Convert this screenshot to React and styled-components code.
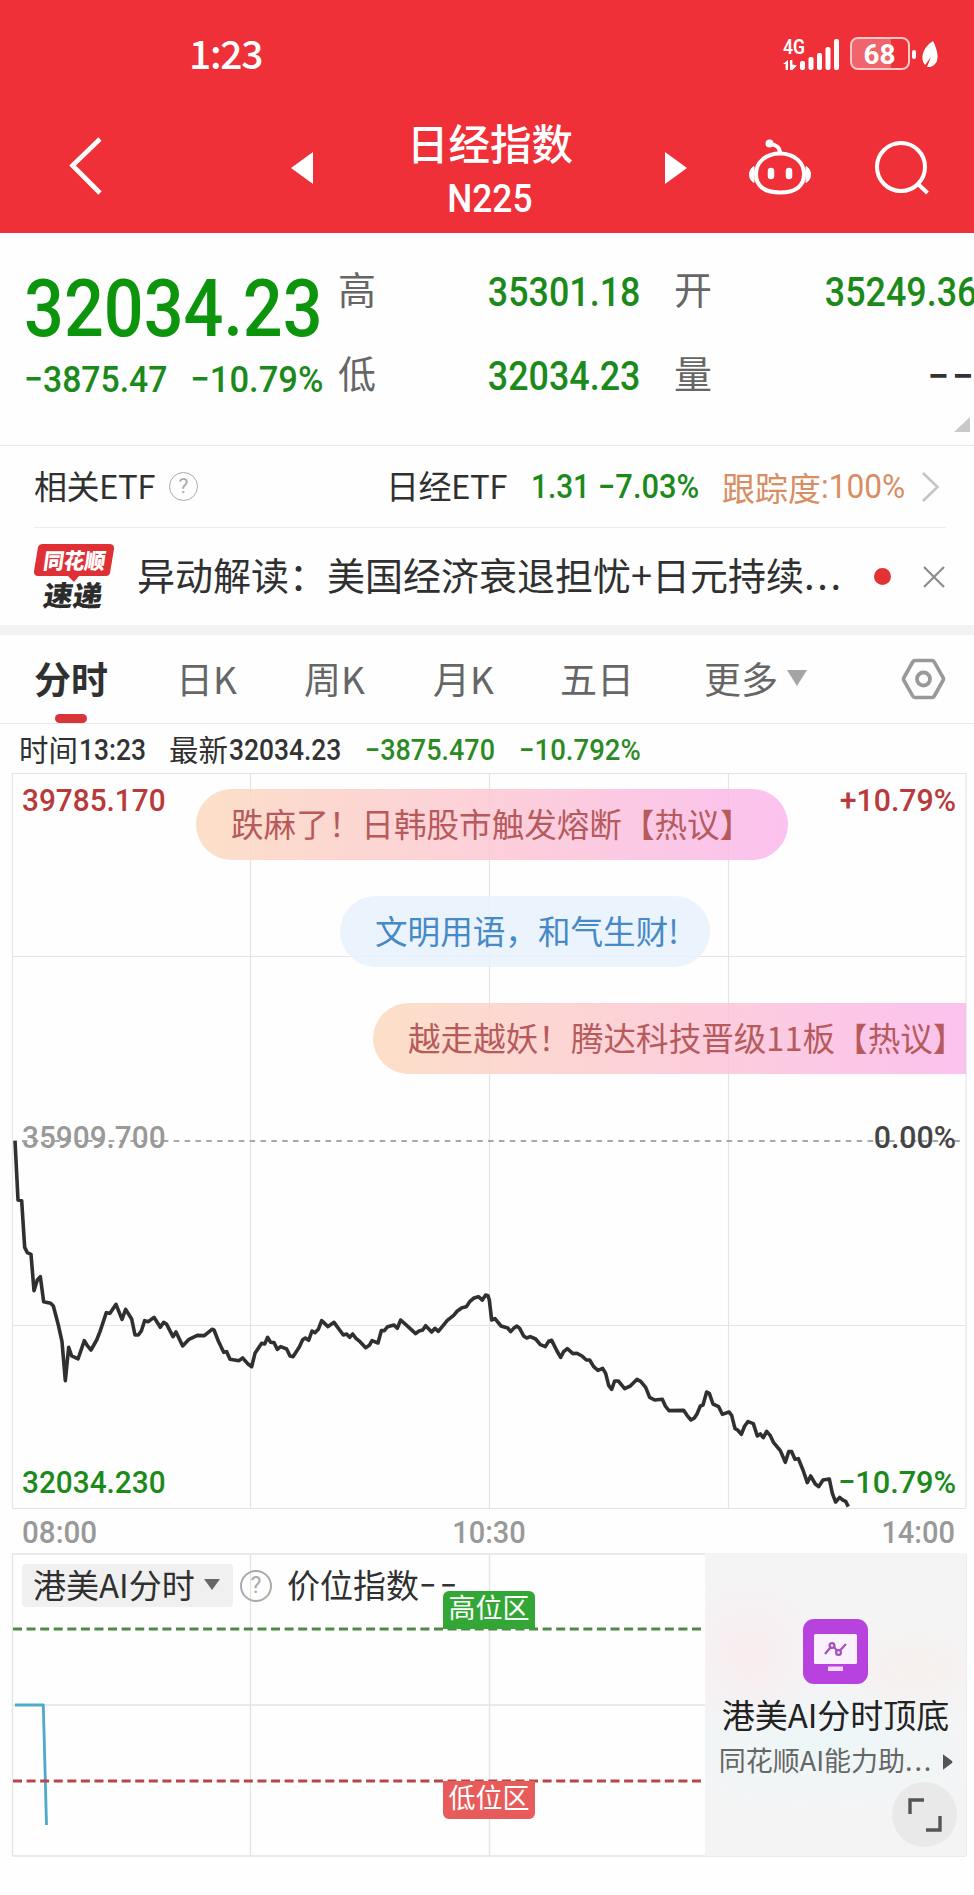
import styled, { createGlobalStyle } from "styled-components";

const GREEN = "#1b8a1b";
const CJK = `"Noto Sans CJK SC", sans-serif`;

// intraday ticks, in thirds of a pixel from the zero line label
const TICKS = `45,62 54,240 65,242 74,382 82,398 93,403 102,512 112,480 121,470 131,545 152,550 160,558 175,615 186,665 196,782 206,682 215,708 234,717 253,662 262,677 273,690 290,660 300,635 319,578 330,580 348,553 366,598 377,568 395,597 405,645 415,645 424,633 434,602 445,605 462,592 481,622 491,607 500,613 519,650 528,636 548,678 567,658 592,646 613,647 636,628 642,630 655,663 671,697 680,695 690,718 717,722 728,714 745,733 755,740 765,700 785,670 794,672 803,652 812,667 822,668 832,688 842,680 860,687 870,708 879,710 898,681 908,659 916,654 926,661 936,633 945,638 955,628 965,602 984,620 1002,607 1030,645 1040,642 1049,652 1058,642 1068,655 1080,665 1097,683 1108,676 1116,662 1134,669 1144,632 1153,632 1163,620 1182,615 1192,625 1202,600 1220,616 1247,641 1257,633 1268,630 1277,617 1295,636 1305,625 1315,634 1342,601 1361,586 1372,573 1386,563 1399,560 1410,544 1422,534 1435,530 1447,540 1457,525 1464,527 1468,540 1475,600 1485,596 1503,618 1523,624 1532,635 1541,625 1551,618 1559,625 1571,648 1580,654 1591,650 1607,657 1621,674 1636,680 1646,664 1655,661 1671,693 1682,712 1691,695 1702,686 1719,701 1731,700 1746,708 1759,720 1769,720 1781,740 1794,751 1808,745 1817,760 1826,796 1835,808 1844,783 1855,783 1874,806 1891,798 1911,778 1922,784 1937,802 1949,832 1964,840 1987,838 1996,858 2007,872 2051,871 2061,886 2073,900 2083,894 2091,882 2101,858 2109,855 2120,816 2128,820 2139,852 2156,860 2167,883 2187,876 2195,886 2205,926 2213,930 2224,943 2234,918 2244,905 2260,911 2272,948 2281,942 2290,953 2300,934 2311,947 2321,968 2341,992 2356,1027 2366,995 2375,995 2385,1018 2395,1016 2409,1050 2422,1088 2432,1068 2446,1092 2456,1100 2469,1080 2488,1077 2497,1120 2507,1146 2519,1132 2528,1140 2537,1144 2545,1160`;

function StatusIcons() {
  return (
    <svg width="160" height="40" viewBox="0 0 160 40">
      <g fill="#fff">
        <rect x="20" y="27" width="5" height="9" rx="2" />
        <rect x="28.500" y="23" width="5" height="13" rx="2" />
        <rect x="37" y="19" width="5" height="17" rx="2" />
        <rect x="45.500" y="13" width="5" height="23" rx="2" />
        <rect x="54" y="5" width="5" height="31" rx="2" />
        <path d="M3 30 8 26v10H5.600v-6zM10 26h2.400v4.500l4.600 1-4.600 4.500H10z" />
        <rect x="132" y="16" width="4" height="9" rx="2" />
        <path fillRule="evenodd" d="M153 7c4 8 7 18 2 23-3 4-8 3-8 3l4-10-6 8c-5-6-3-17 8-24z" />
      </g>
      <path d="M78 5h33v29H78a6 6 0 0 1-6-6V11a6 6 0 0 1 6-6z" fill="#f0656c" />
      <rect x="71" y="4" width="58" height="31" rx="7" fill="none" stroke="#ffc9ca" strokeWidth="2" />
      <text x="3" y="20" fill="#fff" fontFamily="Roboto" fontWeight="600" fontSize="20" textLength="22" lengthAdjust="spacingAndGlyphs">4G</text>
      <text x="83.500" y="30" fill="#fff" fontFamily="Roboto" fontWeight="700" fontSize="28" textLength="32" lengthAdjust="spacingAndGlyphs">68</text>
    </svg>
  );
}

function RobotIcon() {
  return (
    <svg width="66" height="60" viewBox="0 0 66 60" fill="none" stroke="#fff" strokeWidth="4">
      <path d="M33 15.500C48 15.500 57 25 57 36S50 54.500 33 54.500 9 47 9 36 18 15.500 33 15.500z" />
      <path d="M33 15c0-5-4-8.500-10-9" />
      <circle cx="22.500" cy="5.500" r="4" fill="#fff" stroke="none" />
      <path d="M7 28.500c-6 3-6 13 0 16zM59 28.500c6 3 6 13 0 16z" fill="#fff" strokeWidth="1" />
      <path d="M24 33v5M42 33v5" strokeWidth="6.500" strokeLinecap="round" />
    </svg>
  );
}

function ChartGrid() {
  return (
    <svg width="974" height="737" viewBox="0 772 974 737" fill="none">
      <path d="M12.500 773.500H966M12.500 956.500H966M12.500 1325.500H966M12.500 1508.500H966M12.500 773V1508M250.500 773V1508M489.500 773V1508M728.500 773V1508M966 773V1508" stroke="#e4e4e4" strokeWidth="1.200" />
      <path d="M22 1141H962" stroke="#a8a8a8" strokeWidth="2.200" strokeDasharray="5.500 5.340" />
      <g transform="translate(0 1120) scale(.33333)">
        <polyline points={TICKS} stroke="#303030" strokeWidth="10.800" strokeLinejoin="round" />
      </g>
    </svg>
  );
}

function PositionGrid() {
  return (
    <svg width="974" height="304" viewBox="0 1553 974 304" fill="none">
      <path d="M12.500 1554H966M12.500 1705H966M12.500 1856H966M12.500 1554V1856M250.500 1554V1856M489.500 1554V1856M966 1554V1856" stroke="#e4e4e4" strokeWidth="1.300" />
      <path d="M13 1629H701" stroke="#4d8a44" strokeWidth="3" strokeDasharray="9 4.580" />
      <path d="M15 1705H43.300L46.500 1825" stroke="#4ea9cc" strokeWidth="2.800" strokeLinejoin="round" />
      <path d="M13 1781H701" stroke="#b5474b" strokeWidth="3" strokeDasharray="9 4.580" />
    </svg>
  );
}

export default function App() {
  return (
    <Page>
      <Global />
      <Header>
        <StatusBar>
          <Clock>1:23</Clock>
          <StatusIcons />
        </StatusBar>
        <NavBar>
          <svg width="40" height="62" viewBox="0 0 40 62" fill="none" stroke="#fff" strokeWidth="4.600">
            <path d="M32 2 4.500 28.500 32 56" />
          </svg>
          <svg width="22" height="32" viewBox="0 0 22 32" fill="#fff"><path d="M0 16 22 0v32z" /></svg>
          <TitleBox>
            <Title>日经指数</Title>
            <Num size={38} k={0.93} color="#fff" from="center">N225</Num>
          </TitleBox>
          <svg width="22" height="32" viewBox="0 0 22 32" fill="#fff"><path d="M22 16 0 0v32z" /></svg>
          <RobotIcon />
          <svg width="60" height="60" viewBox="0 0 60 60" fill="none" stroke="#fff" strokeWidth="4">
            <circle cx="29" cy="29" r="24" />
            <path d="M46 46 55.500 55" />
          </svg>
        </NavBar>
      </Header>

      <Quote>
        <Last>
          <Num size={80} k={0.877} color="#0d940d">32034.23</Num>
          <Change>
            <Num size={37} k={0.912}>−3875.47</Num>
            <Num size={37} k={0.935} from="right">−10.79%</Num>
          </Change>
        </Last>
        <Stats>
          <Label>高</Label>
          <Num size={40.5} k={0.885} from="right">35301.18</Num>
          <Label>开</Label>
          <Num size={40.5} k={0.885} from="right">35249.36</Num>
          <Label>低</Label>
          <Num size={40.5} k={0.885} from="right">32034.23</Num>
          <Label>量</Label>
          <Num size={40.5} k={0.95} color="#333" from="right" gap={3}>−−</Num>
        </Stats>
        <Corner />
      </Quote>

      <EtfRow>
        <Name tight>相关ETF</Name>
        <Help size={29} line={1.5}>?</Help>
        <Name tight>日经ETF</Name>
        <Num size={33} k={0.9}>1.31</Num>
        <Num size={33} k={0.935}>−7.03%</Num>
        <Track>跟踪度<Num size={33} k={0.96} weight={400} color="#d98d62">:100%</Num></Track>
        <svg width="18" height="30" viewBox="0 0 18 30" fill="none" stroke="#c4c4c4" strokeWidth="2.500">
          <path d="M1 1 15.500 15 1 29" />
        </svg>
      </EtfRow>

      <NewsRow>
        <Logo width="82" height="68" viewBox="0 0 82 68">
          <path d="M9 1H76a4 4 0 0 1 4 5L76 30a4 4 0 0 1-4 3H45l-5 6-6-6H4a4 4 0 0 1-4-5L4 4a5 5 0 0 1 5-3z" fill="#de3035" />
          <g fontFamily="Noto Sans CJK SC" fontWeight="900" transform="skewX(-8)">
            <text x="12" y="25.500" fontSize="22" fill="#fff" textLength="62" lengthAdjust="spacingAndGlyphs">同花顺</text>
            <text x="17" y="63" fontSize="28" fill="#2c2c2c" textLength="59" lengthAdjust="spacingAndGlyphs">速递</text>
          </g>
        </Logo>
        <Headline>异动解读：美国经济衰退担忧+日元持续<Dots>...</Dots></Headline>
        <RedDot />
        <svg width="22" height="22" viewBox="0 0 22 22" stroke="#8c8c8c" strokeWidth="2.200"><path d="M1 1 21 21M21 1 1 21" /></svg>
      </NewsRow>

      <Tabs>
        <Tab active>分时</Tab>
        <Tab>日K</Tab>
        <Tab>周K</Tab>
        <Tab>月K</Tab>
        <Tab>五日</Tab>
        <Tab>更多 <Caret w={10} h={16} color="#a5a5a5" /></Tab>
        <svg width="46" height="42" viewBox="0 0 46 42" fill="none" stroke="#999" strokeWidth="3.600" strokeLinejoin="round">
          <path d="M14 2.500H31q1.500 0 2.300 1.500L42 19.500q1 1.500 0 3L33.300 38q-.8 1.500-2.300 1.500H14q-1.500 0-2.300-1.500L3 22.500q-1-1.500 0-3L11.700 4q.8-1.500 2.300-1.500z" />
          <circle cx="22.500" cy="21" r="6.500" strokeWidth="3.800" />
        </svg>
      </Tabs>

      <InfoRow>
        <Info>时间<Num size={29} k={0.91} color="#333">13:23</Num></Info>
        <Info>最新<Num size={29} k={0.91} color="#333">32034.23</Num></Info>
        <Num size={29} k={0.93} color="#2c8a24">−3875.470</Num>
        <Num size={29} k={0.95} color="#2c8a24">−10.792%</Num>
      </InfoRow>

      <Stack h={737}>
        <ChartGrid />
        <ChartLabels>
          <Pair>
            <Num size={32} k={0.93} color="#b83a3a">39785.170</Num>
            <Num size={32} k={0.945} color="#b83a3a" from="right">+10.79%</Num>
          </Pair>
          <Pair>
            <Num size={32} k={0.93} color="#999">35909.700</Num>
            <Num size={32} k={0.945} color="#444" from="right">0.00%</Num>
          </Pair>
          <Pair>
            <Num size={32} k={0.93} color={GREEN}>32034.230</Num>
            <Num size={32} k={0.96} color={GREEN} from="right">−10.79%</Num>
          </Pair>
        </ChartLabels>
        <Barrage>
          <Pill left={196} w={592}>跌麻了！日韩股市触发熔断【热议】</Pill>
          <Pill left={340} w={370} calm>文明用语，和气生财!</Pill>
          <Pill left={373} w={593} cut>越走越妖！腾达科技晋级11板【热议】</Pill>
        </Barrage>
      </Stack>

      <TimeAxis>
        <Num size={31.500} k={0.94} color="#999">08:00</Num>
        <Num size={31.500} k={0.92} color="#999" from="center">10:30</Num>
        <Num size={31.500} k={0.92} color="#999" from="right">14:00</Num>
      </TimeAxis>

      <Stack h={304}>
        <PositionGrid />
        <Indicator>
          <Picker>港美AI分时<Caret w={8.500} h={11} color="#666" /></Picker>
          <Help size={32} line={2.300}>?</Help>
          <Name>价位指数</Name>
          <Num size={33} k={0.93} weight={400} gap={3.500} color="#333">−−</Num>
        </Indicator>
        <Zones>
          <Zone bg="#33a735">高位区</Zone>
          <Zone bg="#e85b5b" low>低位区</Zone>
        </Zones>
        <Promo>
          <svg width="65" height="65" viewBox="0 0 65 65">
            <rect width="65" height="65" rx="11" fill="#b842de" />
            <rect x="11" y="15" width="43" height="30" rx="1.500" fill="#fbf1fd" />
            <rect x="25" y="47.500" width="15" height="4.500" fill="#f6dcfb" />
            <g fill="none" stroke="#a34fbd" strokeWidth="2.200">
              <path d="M22 35 27.500 28.500M31 27.500 33.500 31.500M37 31.500 43 25" />
              <circle cx="29" cy="26.500" r="2.400" />
              <circle cx="35.500" cy="33.500" r="2.400" />
            </g>
          </svg>
          <PromoTitle>港美AI分时顶底</PromoTitle>
          <PromoSub>
            同花顺AI能力助<Dots>...</Dots>
            <svg width="10" height="16" viewBox="0 0 10 16" fill="#555"><path d="M0 1q0-1 1 0L9 7q1 1 0 2L1 15q-1 1-1 0z" /></svg>
          </PromoSub>
          <Expand>
            <svg width="36" height="36" viewBox="0 0 36 36" fill="none" stroke="#555" strokeWidth="3.400">
              <path d="M3 17V3H17M33 19V33H19" />
            </svg>
          </Expand>
        </Promo>
      </Stack>
    </Page>
  );
}

const Global = createGlobalStyle`
  body {
    margin: 0;
    background: #fff;
  }
  svg {
    display: block;
    flex: none;
  }
`;

const Page = styled.div`
  width: 974px;
  height: 1895px;
  overflow: hidden;
  background: #fefefe;
  color: #303030;
  font-family: ${CJK};
  white-space: nowrap;
`;

const Num = styled.span.withConfig({ shouldForwardProp: (p) => !["size", "k", "from", "color", "gap", "weight"].includes(p) })`
  display: inline-block;
  font-family: Roboto, sans-serif;
  font-weight: ${(p) => p.weight || 500};
  font-size: ${(p) => p.size}px;
  line-height: 1;
  color: ${(p) => p.color || GREEN};
  letter-spacing: ${(p) => p.gap || 0}px;
  transform: scaleX(${(p) => p.k});
  transform-origin: ${(p) => p.from || "left"} center;
`;

const Header = styled.header`
  height: 233px;
  background: #ef3038;
  color: #fff;
`;

const StatusBar = styled.div`
  display: flex;
  justify-content: space-between;
  align-items: center;
  height: 107px;
  padding: 0 34px 0 189px;
  box-sizing: border-box;
`;

const Clock = styled.div`
  padding-bottom: 3px;
  font-size: 39px;
  font-weight: 500;
  letter-spacing: -1.3px;
  line-height: 40px;
`;

const NavBar = styled.div`
  display: grid;
  grid-template-columns: 223px 107px 267px 82px 125px 60px;
  align-items: center;
  height: 122px;
  padding-left: 68px;
`;

const TitleBox = styled.div`
  display: flex;
  flex-direction: column;
  align-items: center;
  gap: 15px;
  width: 184px;
`;

const Title = styled.h1`
  margin: 0;
  font-size: 41.5px;
  font-weight: 500;
  line-height: 46px;
`;

const Quote = styled.section`
  display: grid;
  grid-template-columns: 314px 1fr;
  height: 213px;
  padding-left: 24px;
  box-sizing: border-box;
  border-bottom: 1px solid #e6e6e6;
  position: relative;
`;

const Last = styled.div`
  padding-top: 36px;
`;

const Change = styled.div`
  display: flex;
  justify-content: space-between;
  width: 297px;
  padding-top: 12px;
`;

const Stats = styled.div`
  display: grid;
  grid-template-columns: 60px 242px 96px 241px;
  grid-template-rows: 84px 84px;
  align-items: center;
  padding-top: 17px;
  justify-items: end;
`;

const Label = styled.span`
  justify-self: start;
  padding: 0 0 8px 0;
  font-size: 38px;
  line-height: 40px;
  color: #666;
  ${Num} + & {
    padding-left: 34px;
  }
  ${Num} + &:nth-of-type(5) {
    padding-left: 0;
  }
`;

const Corner = styled.i`
  position: absolute;
  right: 4px;
  bottom: 13px;
  width: 16px;
  height: 15px;
  background: #c9c9c9;
  clip-path: polygon(100% 0, 100% 100%, 0 100%);
`;

const EtfRow = styled.section`
  display: grid;
  grid-template-columns: 135px 217px 145px 67px 124px 200px 18px;
  align-items: center;
  height: 82px;
  width: 912px;
  margin-left: 34px;
  box-sizing: border-box;
  border-bottom: 1px solid #ececec;
`;

const Name = styled.span.withConfig({ shouldForwardProp: (p) => p !== "tight" })`
  font-size: 33px;
  line-height: 36px;
  padding-bottom: 3px;
  letter-spacing: ${(p) => (p.tight ? -0.5 : 0)}px;
`;

const Help = styled.span.withConfig({ shouldForwardProp: (p) => !["size", "line"].includes(p) })`
  display: flex;
  align-items: center;
  justify-content: center;
  width: ${(p) => p.size}px;
  height: ${(p) => p.size}px;
  box-sizing: border-box;
  border: ${(p) => p.line}px solid #aaa;
  border-radius: 50%;
  color: #aaa;
  font: 400 ${(p) => p.size * 0.72}px/1 Roboto, sans-serif;
`;

const Track = styled.span`
  display: flex;
  align-items: center;
  font-size: 33px;
  line-height: 36px;
  color: #d98d62;
`;

const NewsRow = styled.section`
  display: grid;
  grid-template-columns: 103px 737px 49px 22px;
  align-items: center;
  height: 97px;
  padding-left: 34px;
  border-bottom: 10px solid #f2f2f2;
`;

const Logo = styled.svg`
  overflow: visible;
`;

const Headline = styled.p`
  margin: 0;
  padding-bottom: 5px;
  font-size: 38px;
  line-height: 44px;
`;

const Dots = styled.span`
  letter-spacing: 0.07em;
`;

const RedDot = styled.i`
  width: 17px;
  height: 17px;
  border-radius: 50%;
  background: #e23233;
`;

const Tabs = styled.nav`
  display: grid;
  grid-template-columns: 142px 128px 129px 127px 144px 197px 46px;
  align-items: center;
  height: 89px;
  padding-left: 34px;
  box-sizing: border-box;
  border-bottom: 1px solid #e9e9e9;
`;

const Tab = styled.span.withConfig({ shouldForwardProp: (p) => p !== "active" })`
  display: flex;
  align-items: center;
  align-self: stretch;
  gap: 9px;
  width: max-content;
  font-size: 37px;
  color: ${(p) => (p.active ? "#303030" : "#666")};
  font-weight: ${(p) => (p.active ? 700 : 400)};
  position: relative;
  padding-bottom: 2px;
  &::after {
    content: "";
    display: ${(p) => (p.active ? "block" : "none")};
    position: absolute;
    left: 21px;
    bottom: 0;
    width: 32px;
    height: 9px;
    border-radius: 5px;
    background: #d93538;
  }
`;

const Caret = styled.i.withConfig({ shouldForwardProp: (p) => !["w", "h", "color"].includes(p) })`
  border: ${(p) => p.w}px solid transparent;
  border-top: ${(p) => p.h}px solid ${(p) => p.color};
  border-bottom: 0;
`;

const InfoRow = styled.div`
  display: grid;
  grid-template-columns: 150px 196px 154px 140px;
  align-items: center;
  height: 48px;
  padding: 5px 0 0 19px;
  box-sizing: border-box;
`;

const Info = styled.span`
  display: flex;
  align-items: center;
  margin-top: -6px;
  font-size: 29.5px;
  line-height: 32px;
  gap: 1px;
  ${Num} {
    padding-top: 6px;
  }
`;

// layers share one grid cell
const Stack = styled.section.withConfig({ shouldForwardProp: (p) => p !== "h" })`
  display: grid;
  height: ${(p) => p.h}px;
  & > * {
    grid-area: 1 / 1;
  }
`;

const ChartLabels = styled.div`
  display: flex;
  flex-direction: column;
  justify-content: space-between;
  padding: 12px 18px 11px 22px;
`;

const Pair = styled.div`
  display: flex;
  justify-content: space-between;
  &:nth-child(2) {
    margin: -4px 0 4px;
  }
`;

const Barrage = styled.div`
  display: flex;
  flex-direction: column;
  gap: 36px;
  padding-top: 17px;
`;

const Pill = styled.div.withConfig({ shouldForwardProp: (p) => !["left", "w", "calm", "cut"].includes(p) })`
  display: flex;
  align-items: center;
  width: ${(p) => p.w}px;
  height: 71px;
  margin-left: ${(p) => p.left}px;
  padding: 0 0 4px 35px;
  box-sizing: border-box;
  overflow: hidden;
  border-radius: ${(p) => (p.cut ? "36px 0 0 36px" : "36px")};
  font-size: 32.6px;
  color: ${(p) => (p.calm ? "#4589c6" : "#b65a5c")};
  background: ${(p) =>
    p.calm
      ? "rgba(230, 240, 253, 0.82)"
      : "linear-gradient(90deg, rgba(252, 218, 192, 0.86), rgba(252, 200, 212, 0.86) 50%, rgba(250, 184, 236, 0.86))"};
`;

const TimeAxis = styled.div`
  display: flex;
  justify-content: space-between;
  align-items: center;
  height: 44px;
  padding: 3px 19px 0 22px;
  box-sizing: border-box;
`;

const Indicator = styled.div`
  display: flex;
  align-items: center;
  align-self: start;
  padding: 11px 0 0 22px;
  ${Help} {
    margin: 0 15px 0 7px;
  }
`;

const Picker = styled.div`
  display: flex;
  align-items: center;
  gap: 9px;
  width: 211px;
  height: 43px;
  padding: 0 0 3px 11px;
  box-sizing: border-box;
  border-radius: 4px;
  background: #f0f0f0;
  font-size: 33px;
`;

const Zones = styled.div`
  display: flex;
  flex-direction: column;
  gap: 152px;
  padding: 38px 0 0 443px;
  width: 92px;
`;

const Zone = styled.span.withConfig({ shouldForwardProp: (p) => !["bg", "low"].includes(p) })`
  width: 92px;
  height: 38px;
  background: ${(p) => p.bg};
  border-radius: ${(p) => (p.low ? "0 0 6px 6px" : "6px 6px 0 0")};
  color: #fff;
  font-size: 27px;
  line-height: 32px;
  text-align: center;
`;

const Promo = styled.aside`
  display: flex;
  flex-direction: column;
  align-items: center;
  justify-self: end;
  width: 261px;
  height: 303px;
  margin-right: 8px;
  padding-top: 66px;
  box-sizing: border-box;
  background:
    radial-gradient(ellipse 80px 80px at 45px 100px, rgba(250, 232, 235, 0.7), transparent),
    radial-gradient(ellipse 90px 50px at 210px 115px, rgba(249, 236, 232, 0.6), transparent),
    radial-gradient(ellipse 170px 70px at 120px 195px, rgba(236, 247, 248, 0.9), transparent),
    #f4f4f5;
`;

const PromoTitle = styled.div`
  margin-top: 10px;
  font-size: 33px;
  line-height: 40px;
  color: #222;
`;

const PromoSub = styled.div`
  display: flex;
  align-items: center;
  margin-top: 8px;
  padding-left: 1px;
  font-size: 27px;
  line-height: 36px;
  color: #666;
  svg {
    margin: 3px 0 0 10px;
  }
`;

const Expand = styled.div`
  display: flex;
  align-items: center;
  justify-content: center;
  align-self: flex-end;
  width: 65px;
  height: 65px;
  margin: 4px 9px 0 0;
  border-radius: 50%;
  background: #e9e9ea;
`;
